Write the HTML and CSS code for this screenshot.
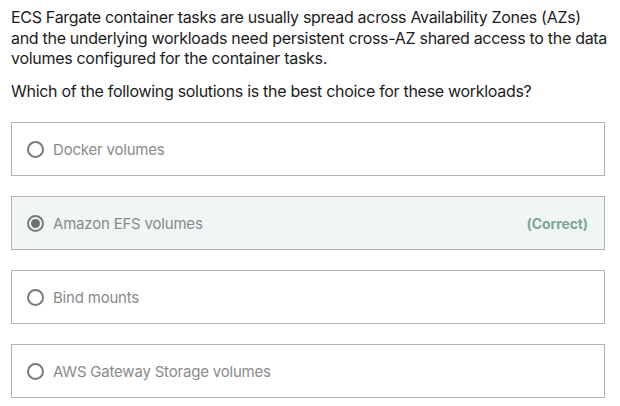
FILE: index.html
```html
<!DOCTYPE html>
<html>
<head>
<meta charset="utf-8">
<link rel="stylesheet" href="styles.css">
</head>
<body>
<div class="question">
  <p class="prompt">ECS Fargate container tasks are usually spread across Availability Zones (AZs)<br>and the underlying workloads need persistent cross-AZ shared access to the data volumes configured for the container tasks.</p>
  <p class="ask">Which of the following solutions is the best choice for these workloads?</p>
  <ul class="options">
    <li class="option"><span class="radio"></span><span class="label">Docker volumes</span></li>
    <li class="option selected"><span class="radio checked"></span><span class="label">Amazon EFS volumes</span><span class="correct">(Correct)</span></li>
    <li class="option"><span class="radio"></span><span class="label">Bind mounts</span></li>
    <li class="option"><span class="radio"></span><span class="label">AWS Gateway Storage volumes</span></li>
  </ul>
</div>
</body>
</html>
```
FILE: styles.css
```css
html, body {
  margin: 0;
  padding: 0;
  background: #ffffff;
}
body {
  font-family: Inter, "Liberation Sans", sans-serif;
  color: #1c1c1c;
}
.question {
  width: 606px;
  padding: 7px 0 0 11px;
}
.prompt {
  margin: 0;
  font-size: 16px;
  line-height: 20.5px;
  letter-spacing: -0.3px;
}
.ask {
  margin: 12px 0 0;
  font-size: 16px;
  line-height: 20.5px;
  letter-spacing: -0.3px;
}
.options {
  list-style: none;
  margin: 21px 12px 0 0;
  padding: 0;
  display: flex;
  flex-direction: column;
  gap: 20px;
}
.option {
  box-sizing: border-box;
  height: 54px;
  border: 1px solid #b2b2b2;
  display: flex;
  align-items: center;
  padding: 0 16px 0 15px;
  font-size: 15px;
  letter-spacing: -0.2px;
  color: #8a8a8a;
}
.option.selected {
  background: #f0f5f5;
}
.radio {
  box-sizing: border-box;
  width: 17px;
  height: 17px;
  border: 2px solid #7a7a7a;
  border-radius: 50%;
  margin-right: 9px;
  flex: none;
  display: flex;
  align-items: center;
  justify-content: center;
}
.radio.checked::after {
  content: "";
  width: 9px;
  height: 9px;
  border-radius: 50%;
  background: #6f6f6f;
}
.label {
  flex: 1;
}
.correct {
  font-weight: 700;
  font-size: 14px;
  letter-spacing: -0.1px;
  color: #7fa596;
}
```
